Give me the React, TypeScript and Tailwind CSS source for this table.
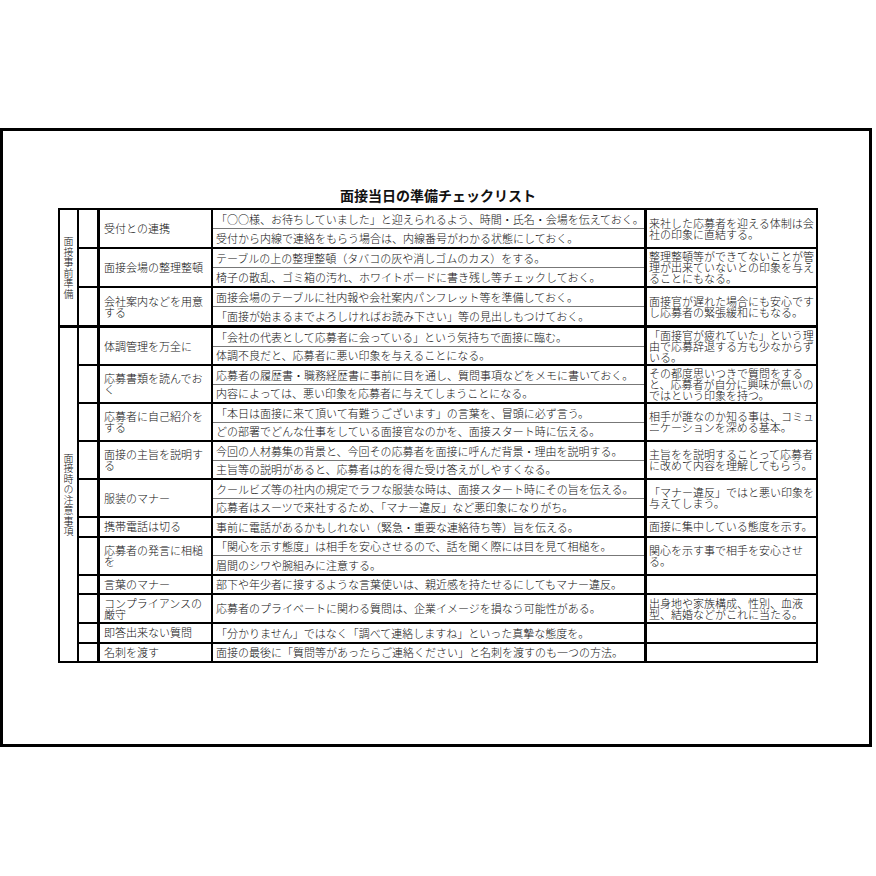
import React from "react";

type Item = {
  label: string[];
  lines: string[];
  note: string[];
  h?: string;
};

type Group = {
  title: string;
  sub: string;
  items: Item[];
};

const groups: Group[] = [
  {
    title: "面接事前準備",
    sub: "h-[18px]",
    items: [
      {
        label: ["受付との連携"],
        lines: [
          "「○○様、お待ちしていました」と迎えられるよう、時間・氏名・会場を伝えておく。",
          "受付から内線で連絡をもらう場合は、内線番号がわかる状態にしておく。",
        ],
        note: ["来社した応募者を迎える体制は会", "社の印象に直結する。"],
      },
      {
        label: ["面接会場の整理整頓"],
        lines: [
          "テーブルの上の整理整頓（タバコの灰や消しゴムのカス）をする。",
          "椅子の散乱、ゴミ箱の汚れ、ホワイトボードに書き残し等チェックしておく。",
        ],
        note: ["整理整頓等ができてないことが管", "理が出来ていないとの印象を与え", "ることにもなる。"],
      },
      {
        label: ["会社案内などを用意", "する"],
        lines: [
          "面接会場のテーブルに社内報や会社案内パンフレット等を準備しておく。",
          "「面接が始まるまでよろしければお読み下さい」等の見出しもつけておく。",
        ],
        note: ["面接官が遅れた場合にも安心です", "し応募者の緊張緩和にもなる。"],
      },
    ],
  },
  {
    title: "面接時の注意事項",
    sub: "h-[17.5px]",
    items: [
      {
        label: ["体調管理を万全に"],
        lines: [
          "「会社の代表として応募者に会っている」という気持ちで面接に臨む。",
          "体調不良だと、応募者に悪い印象を与えることになる。",
        ],
        note: ["「面接官が疲れていた」という理", "由で応募辞退する方も少なからず", "いる。"],
      },
      {
        label: ["応募書類を読んでお", "く"],
        lines: [
          "応募者の履歴書・職務経歴書に事前に目を通し、質問事項などをメモに書いておく。",
          "内容によっては、悪い印象を応募者に与えてしまうことになる。",
        ],
        note: ["その都度思いつきで質問をする", "と、応募者が自分に興味が無いの", "ではという印象を持つ。"],
      },
      {
        label: ["応募者に自己紹介を", "する"],
        lines: [
          "「本日は面接に来て頂いて有難うございます」の言葉を、冒頭に必ず言う。",
          "どの部署でどんな仕事をしている面接官なのかを、面接スタート時に伝える。",
        ],
        note: ["相手が誰なのか知る事は、コミュ", "ニケーションを深める基本。"],
      },
      {
        label: ["面接の主旨を説明す", "る"],
        lines: [
          "今回の人材募集の背景と、今回その応募者を面接に呼んだ背景・理由を説明する。",
          "主旨等の説明があると、応募者は的を得た受け答えがしやすくなる。",
        ],
        note: ["主旨をを説明することって応募者", "に改めて内容を理解してもらう。"],
      },
      {
        label: ["服装のマナー"],
        lines: [
          "クールビズ等の社内の規定でラフな服装な時は、面接スタート時にその旨を伝える。",
          "応募者はスーツで来社するため、「マナー違反」など悪印象になりがち。",
        ],
        note: ["「マナー違反」ではと悪い印象を", "与えてしまう。"],
      },
      {
        label: ["携帯電話は切る"],
        lines: ["事前に電話があるかもしれない（緊急・重要な連絡待ち等）旨を伝える。"],
        note: ["面接に集中している態度を示す。"],
      },
      {
        label: ["応募者の発言に相槌", "を"],
        lines: [
          "「関心を示す態度」は相手を安心させるので、話を聞く際には目を見て相槌を。",
          "眉間のシワや腕組みに注意する。",
        ],
        note: ["関心を示す事で相手を安心させ", "る。"],
      },
      {
        label: ["言葉のマナー"],
        lines: ["部下や年少者に接するような言葉使いは、親近感を持たせるにしてもマナー違反。"],
        note: [],
      },
      {
        label: ["コンプライアンスの", "厳守"],
        lines: ["応募者のプライベートに関わる質問は、企業イメージを損なう可能性がある。"],
        note: ["出身地や家族構成、性別、血液", "型、結婚などがこれに当たる。"],
        h: "h-[27px]",
      },
      {
        label: ["即答出来ない質問"],
        lines: ["「分かりません」ではなく「調べて連絡しますね」といった真摯な態度を。"],
        note: [],
      },
      {
        label: ["名刺を渡す"],
        lines: ["面接の最後に「質問等があったらご連絡ください」と名刺を渡すのも一つの方法。"],
        note: [],
      },
    ],
  },
];

const ItemRow = ({ item, sub, first }: { item: Item; sub: string; first: boolean }) => {
  const rowH = item.h || sub;
  return (
    <div className={`flex ${first ? "" : "border-t-2 border-black"}`}>
      <div className="w-[21px] shrink-0 border-r-[3px] border-black" />
      <div className="w-[113px] shrink-0 border-r-2 border-black flex items-center pl-[4px] leading-[11px]">
        <div>
          {item.label.map((l, i) => (
            <div key={i} className="whitespace-nowrap">
              {l}
            </div>
          ))}
        </div>
      </div>
      <div className="w-[434px] shrink-0 border-r-[3px] border-black flex flex-col">
        {item.lines.map((l, j) => (
          <React.Fragment key={j}>
            {j > 0 && <div className="h-px bg-[#777]" />}
            <div className={`${rowH} flex items-center pl-[3px] whitespace-nowrap overflow-hidden`}>{l}</div>
          </React.Fragment>
        ))}
      </div>
      <div className="flex-1 flex items-center pl-[2px] leading-[11px]">
        <div>
          {item.note.map((n, k) => (
            <div key={k} className="whitespace-nowrap">
              {n}
            </div>
          ))}
        </div>
      </div>
    </div>
  );
};

export default function App() {
  return (
    <div className="w-[876px] h-[876px] bg-white pt-[128px] text-[#111] font-['Noto_Sans_CJK_JP',sans-serif]">
      <div className="w-[872px] h-[619px] border-[3px] border-black pt-[55px]">
        <div className="w-[760px] ml-[55px]">
          <h1 className="text-center text-[14px] leading-[18px] font-bold mb-[4px]">面接当日の準備チェックリスト</h1>
          <div className="border-2 border-black text-[11px] font-light">
            {groups.map((g, gi) => (
              <div key={gi} className={`flex ${gi > 0 ? "border-t-[3px] border-black" : ""}`}>
                <div className="w-[19px] shrink-0 border-r-2 border-black flex flex-col items-center justify-center text-[10px] leading-[10.5px]">
                  {g.title.split("").map((c, ci) => (
                    <span key={ci} className="block">
                      {c}
                    </span>
                  ))}
                </div>
                <div className="flex-1 flex flex-col">
                  {g.items.map((it, ii) => (
                    <ItemRow key={ii} item={it} sub={g.sub} first={ii === 0} />
                  ))}
                </div>
              </div>
            ))}
          </div>
        </div>
      </div>
    </div>
  );
}
